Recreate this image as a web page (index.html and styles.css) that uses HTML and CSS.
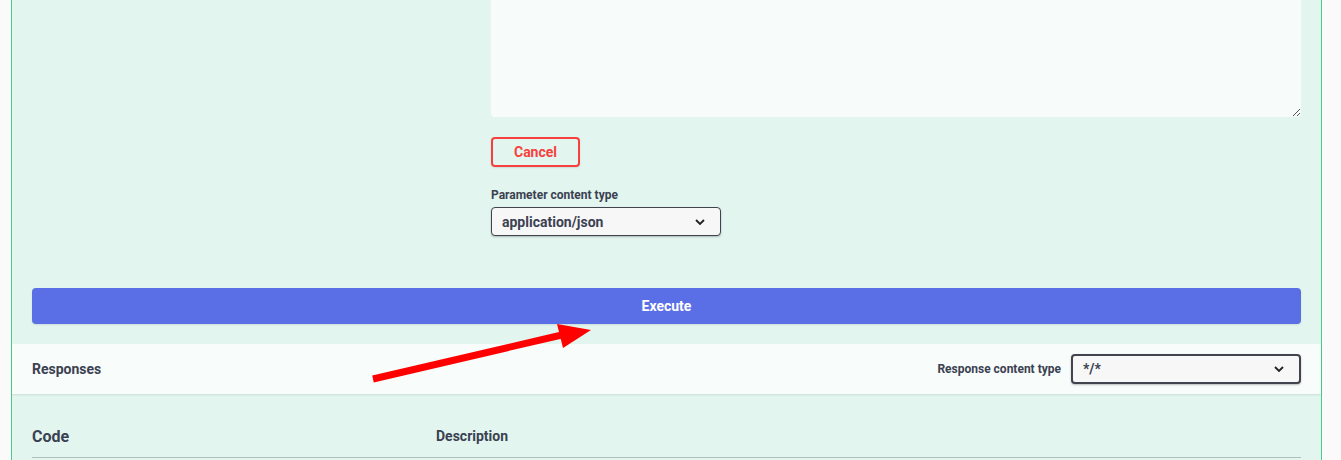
FILE: index.html
```html
<!DOCTYPE html>
<html>
<head>
<meta charset="utf-8">
<link rel="stylesheet" href="styles.css">
</head>
<body>
<div class="opblock">
  <div class="params">
    <div class="param-name"></div>
    <div class="param-value">
      <div class="textarea"><span class="grip"></span></div>
      <button class="btn-cancel">Cancel</button>
      <div class="ctype">
        <div class="ctype-label">Parameter content type</div>
        <div class="select sel-param">
          <span>application/json</span>
          <svg class="chev" width="12" height="8" viewBox="0 0 12 8"><path d="M2 2 L6 6 L10 2" fill="none" stroke="#222" stroke-width="1.8"/></svg>
        </div>
      </div>
    </div>
  </div>
  <div class="exec-wrap">
    <button class="btn-exec">Execute</button>
  </div>
  <div class="resp-head">
    <div class="resp-title">Responses</div>
    <div class="resp-ctype">
      <span class="resp-label">Response content type</span>
      <div class="select sel-resp">
        <span>*/*</span>
        <svg class="chev" width="12" height="8" viewBox="0 0 12 8"><path d="M2 2 L6 6 L10 2" fill="none" stroke="#222" stroke-width="1.8"/></svg>
      </div>
    </div>
  </div>
  <div class="resp-body">
    <div class="resp-table-head">
      <div class="col-code">Code</div>
      <div class="col-desc">Description</div>
    </div>
  </div>
</div>
<svg class="arrow" width="1341" height="460" viewBox="0 0 1341 460">
  <line x1="373" y1="379" x2="566" y2="334" stroke="#ff0000" stroke-width="7"/>
  <polygon points="557,324 591,330 563,348" fill="#ff0000"/>
</svg>
</body>
</html>
```

FILE: styles.css
```css
* { box-sizing: border-box; }
html, body { margin: 0; padding: 0; }
body {
  background: #fafafa;
  font-family: "Liberation Sans Narrow", "Roboto", sans-serif;
  color: #3b4151;
  width: 1341px;
  height: 460px;
  overflow: hidden;
  position: relative;
}
.opblock {
  margin-left: 11px;
  width: 1311px;
  height: 460px;
  border-left: 1px solid #49cc90;
  border-right: 1px solid #49cc90;
  background: #e2f6ef;
}
.params {
  display: flex;
  padding: 0 20px;
}
.param-name { width: 459px; flex: none; }
.param-value { flex: 1; }
.textarea {
  height: 117px;
  background: #f7fcfa;
  border-radius: 0 0 4px 4px;
  position: relative;
}
.grip {
  position: absolute;
  right: 1px;
  bottom: 1px;
  width: 7px;
  height: 7px;
  background: linear-gradient(135deg, transparent 45%, #555 45%, #555 55%, transparent 55%, transparent 75%, #555 75%, #555 85%, transparent 85%);
}
.btn-cancel {
  display: block;
  margin-top: 20px;
  width: 89px;
  height: 30px;
  background: transparent;
  border: 2px solid #f93e3e;
  border-radius: 4px;
  color: #f93e3e;
  font-family: inherit;
  font-weight: 700;
  font-size: 14px;
  box-shadow: 0 1px 2px rgba(0,0,0,.1);
  padding: 0;
}
.ctype { margin-top: 21px; }
.ctype-label {
  font-size: 12px;
  font-weight: 700;
  line-height: 15px;
  margin-bottom: 4px;
}
.select {
  display: flex;
  align-items: center;
  justify-content: space-between;
  background: #f7f7f7;
  border-radius: 4px;
  font-weight: 700;
  box-shadow: 0 1px 2px rgba(0,0,0,.25);
}
.sel-param {
  width: 230px;
  height: 29px;
  border: 1px solid #41444e;
  padding: 0 14px 0 10px;
  font-size: 14px;
}
.chev { display: block; }
.exec-wrap {
  padding: 52px 20px 20px;
}
.btn-exec {
  display: block;
  width: 100%;
  height: 36px;
  background: #5a6fe6;
  border: none;
  border-radius: 4px;
  color: #fff;
  font-family: inherit;
  font-weight: 700;
  font-size: 14px;
  box-shadow: 0 1px 2px rgba(0,0,0,.1);
}
.resp-head {
  height: 50px;
  background: #f8fcfb;
  box-shadow: 0 1px 2px rgba(0,0,0,.1);
  display: flex;
  align-items: center;
  justify-content: space-between;
  padding: 0 20px;
}
.resp-title { font-size: 14px; font-weight: 700; }
.resp-ctype { display: flex; align-items: center; gap: 10px; }
.resp-label { font-size: 12px; font-weight: 700; }
.sel-resp {
  width: 230px;
  height: 30px;
  border: 2px solid #41444e;
  padding: 0 14px 0 10px;
  font-size: 14px;
}
.resp-body { padding: 0 20px; }
.resp-table-head {
  display: flex;
  align-items: center;
  height: 64px;
  padding-top: 21px;
  border-bottom: 1px solid rgba(59,65,81,.3);
}
.col-code { width: 404px; font-size: 16px; font-weight: 700; }
.col-desc { font-size: 14px; font-weight: 700; }
.arrow {
  position: absolute;
  left: 0;
  top: 0;
  pointer-events: none;
}
```
